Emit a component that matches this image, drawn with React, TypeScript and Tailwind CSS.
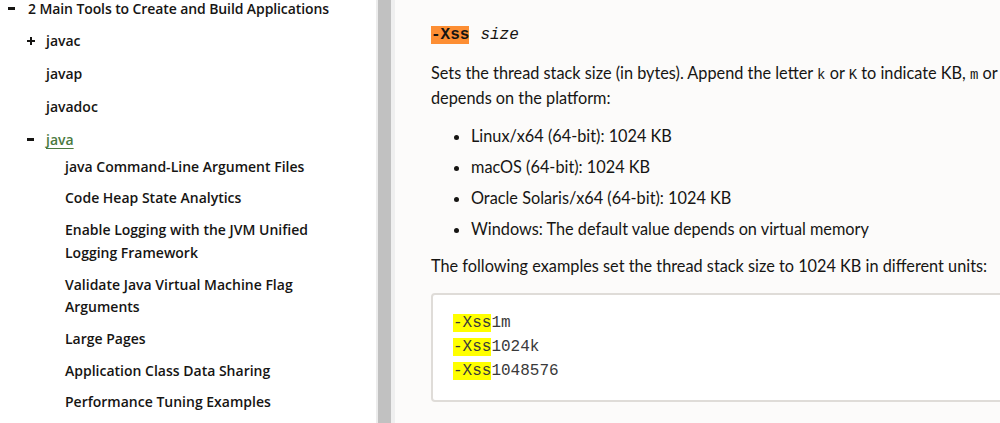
import type { ReactNode } from 'react'

const subItems = [
  'java Command-Line Argument Files',
  'Code Heap State Analytics',
  'Enable Logging with the JVM Unified Logging Framework',
  'Validate Java Virtual Machine Flag Arguments',
  'Large Pages',
  'Application Class Data Sharing',
  'Performance Tuning Examples',
]

function Minus() {
  return <span className="block w-[7px] h-[3px] bg-[#161513]" />
}

function Plus() {
  return (
    <span className="relative block w-[8px] h-[8px]">
      <span className="absolute left-0 top-[3px] w-[8px] h-[2px] bg-[#161513]" />
      <span className="absolute left-[3px] top-0 w-[2px] h-[8px] bg-[#161513]" />
    </span>
  )
}

function Sidebar() {
  return (
    <div className="w-[376px] shrink-0 bg-white text-[14px] font-semibold text-[#161513] font-['Open_Sans',sans-serif]">
      <div className="mt-[-7px]">
        <div className="flex items-center h-[31px]">
          <div className="w-[28px] pl-[8px] shrink-0"><Minus /></div>
          <span className="tracking-[-0.1px]">2 Main Tools to Create and Build Applications</span>
        </div>
        <div className="flex items-center h-[33px]">
          <div className="w-[46px] pl-[27px] shrink-0"><Plus /></div>
          <span>javac</span>
        </div>
        <div className="flex items-center h-[33px] pl-[46px]">javap</div>
        <div className="flex items-center h-[33px] pl-[46px]">javadoc</div>
        <div className="flex items-center h-[33px]">
          <div className="w-[46px] pl-[27px] shrink-0"><Minus /></div>
          <span className="font-semibold text-[#4b7a3f] underline underline-offset-[3px]">java</span>
        </div>
        <ul className="mt-[-5px] pl-[65px] pr-[40px]">
          {subItems.map((s) => (
            <li key={s} className="py-[4.6px] leading-[22.6px]">{s}</li>
          ))}
        </ul>
      </div>
    </div>
  )
}

function Divider() {
  return (
    <div className="flex shrink-0 h-full">
      <div className="w-[2px] bg-[#ececec]" />
      <div className="w-[13px] bg-[#c1c1c1]" />
      <div className="w-[4px] bg-[#efefef]" />
    </div>
  )
}

function Hl({ children }: { children: ReactNode }) {
  return <span className="bg-[#ffff00]">{children}</span>
}

function Code({ children }: { children: ReactNode }) {
  return <code className="font-['Liberation_Mono',monospace] text-[14px] leading-none">{children}</code>
}

function Content() {
  return (
    <div className="flex-1 min-w-0 bg-[#fcfbfa] pl-[36px] text-[#161513] font-['Lato',sans-serif] text-[16.3px] overflow-hidden">
      <div className="pt-[26px] flex items-center gap-[11px] font-['Liberation_Mono',monospace] text-[16px] leading-[18px]">
        <span className="bg-[#fd8e33] font-bold">-Xss</span>
        <span className="italic">size</span>
      </div>
      <p className="mt-[16px] leading-[25px] whitespace-nowrap">
        Sets the thread stack size (in bytes). Append the letter <Code>k</Code> or <Code>K</Code> to indicate KB,{' '}
        <Code>m</Code> or
        <br />
        depends on the platform:
      </p>
      <ul className="mt-[10px] pl-[40px] list-disc">
        <li className="leading-[25px] py-[3px]">Linux/x64 (64-bit): 1024 KB</li>
        <li className="leading-[25px] py-[3px]">macOS (64-bit): 1024 KB</li>
        <li className="leading-[25px] py-[3px]">Oracle Solaris/x64 (64-bit): 1024 KB</li>
        <li className="leading-[25px] py-[3px]">Windows: The default value depends on virtual memory</li>
      </ul>
      <p className="mt-[9px] leading-[25px] whitespace-nowrap">
        The following examples set the thread stack size to 1024 KB in different units:
      </p>
      <pre className="mt-[15px] w-[700px] bg-white border-2 border-[#dfdcd8] rounded-[4px] pl-[20px] pt-[16px] pb-[17px] font-['Liberation_Mono',monospace] text-[16px] leading-[24px] text-[#3a3a3a]">
        <Hl>-Xss</Hl>1m{'\n'}
        <Hl>-Xss</Hl>1024k{'\n'}
        <Hl>-Xss</Hl>1048576
      </pre>
    </div>
  )
}

export default function App() {
  return (
    <div className="flex h-[423px] w-[1000px] overflow-hidden">
      <Sidebar />
      <Divider />
      <Content />
    </div>
  )
}
